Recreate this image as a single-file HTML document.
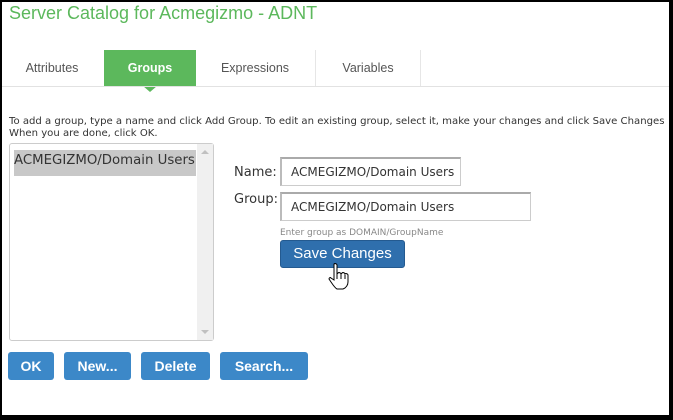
<!DOCTYPE html>
<html><head><style>
*{margin:0;padding:0;box-sizing:border-box}
body{width:673px;height:420px;background:#000;position:relative;overflow:hidden;font-family:"DejaVu Sans","Liberation Sans",sans-serif}
#p{position:absolute;left:2px;top:2px;width:667px;height:413px;background:#fff;overflow:hidden}
.a{position:absolute}
.title{left:7px;top:1px;font-family:"Liberation Sans",sans-serif;font-size:18px;color:#5cb85c;white-space:nowrap}
.tab{top:48px;height:36px;font-family:"Liberation Sans",sans-serif;font-size:12.5px;color:#555;text-align:center;line-height:36px}
.sep{top:48px;width:1px;height:36px;background:#e6e6e6}
.btn{background:#3c88c8;color:#fff;border-radius:3px;font-family:"Liberation Sans",sans-serif;font-weight:bold;font-size:14px;text-align:center;line-height:28px;height:28px;top:350px}
.inp{border:1px solid #ccc;border-top:2px solid #aaa;border-left:2px solid #bbb;font-size:12px;color:#333;padding-left:9px;line-height:27px;height:29px;white-space:nowrap;overflow:hidden}
</style></head><body><div id="p">
<div class="a title">Server Catalog for Acmegizmo - ADNT</div>
<div class="a tab" style="left:0;width:100px">Attributes</div>
<div class="a tab" style="left:102px;width:92px;background:#5cb85c;color:#fff;font-weight:bold">Groups</div>
<div class="a" style="left:141px;top:84px;width:0;height:0;border-left:7px solid transparent;border-right:7px solid transparent;border-top:6px solid #5cb85c"></div>
<div class="a tab" style="left:194px;width:118px">Expressions</div>
<div class="a sep" style="left:313px"></div>
<div class="a tab" style="left:314px;width:104px">Variables</div>
<div class="a sep" style="left:418px"></div>
<div class="a" style="left:0;top:84px;width:667px;height:1px;background:#e2e2e2"></div>
<div class="a" style="left:7px;top:114px;font-size:10.1px;color:#333;line-height:12px;white-space:nowrap">To add a group, type a name and click Add Group. To edit an existing group, select it, make your changes and click Save Changes<br>When you are done, click OK.</div>
<div class="a" style="left:7px;top:141px;width:205px;height:198px;border:1px solid #ccc;border-radius:3px;background:#fff">
<div class="a" style="left:4px;top:6px;width:182px;height:26px;background:#c8c8c8"></div>
<div class="a" style="left:4px;top:9px;font-size:13.3px;color:#333;white-space:nowrap">ACMEGIZMO/Domain Users</div>
<div class="a" style="right:0;top:0;width:16px;height:196px;background:#f0f0f0"></div>
<div class="a" style="right:4px;top:6px;border-left:4px solid transparent;border-right:4px solid transparent;border-bottom:4px solid #c0c0c0"></div>
<div class="a" style="right:4px;bottom:6px;border-left:4px solid transparent;border-right:4px solid transparent;border-top:4px solid #c0c0c0"></div>
</div>
<div class="a" style="left:232px;top:163px;font-size:13px;color:#333">Name:</div>
<div class="a inp" style="left:278px;top:155px;width:181px">ACMEGIZMO/Domain Users</div>
<div class="a" style="left:232px;top:190px;font-size:13px;color:#333">Group:</div>
<div class="a inp" style="left:278px;top:190px;width:251px">ACMEGIZMO/Domain Users</div>
<div class="a" style="left:278px;top:226px;font-size:9px;color:#888;white-space:nowrap">Enter group as DOMAIN/GroupName</div>
<div class="a" style="left:278px;top:238px;width:125px;height:28px;background:#2f6fad;border:1px solid #245a90;border-radius:3px;color:#fff;font-family:'Liberation Sans',sans-serif;font-size:15px;text-align:center;line-height:26px">Save Changes</div>
<svg class="a" style="left:326px;top:260px" width="22" height="28" viewBox="0 0 22 28"><path d="M6 2c1-1 3 0 3 1v9l1-1c1-1 3 0 3 1l1-1c1-1 3 0 3 1 1-1 3 0 3 1v7c0 3-2 6-5 7H9c-2-1-4-4-6-7l-2-3c0-1 1-2 2-1l3 2V3z" fill="#fff" stroke="#000" stroke-width="1"/><path d="M9 12v5M13 12v5M17 13v4" stroke="#000" stroke-width="1"/></svg>
<div class="a btn" style="left:6px;width:46px">OK</div>
<div class="a btn" style="left:62px;width:67px">New...</div>
<div class="a btn" style="left:139px;width:69px">Delete</div>
<div class="a btn" style="left:218px;width:88px">Search...</div>
</div></body></html>
